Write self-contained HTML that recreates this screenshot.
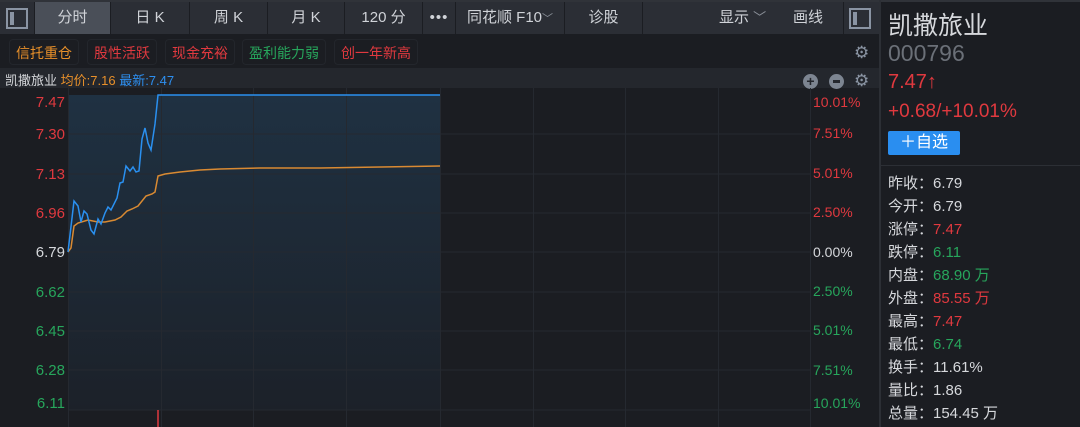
<!DOCTYPE html>
<html><head><meta charset="utf-8"><style>
*{margin:0;padding:0;box-sizing:border-box}
body{width:1080px;height:427px;background:#1b1d22;font-family:"Liberation Sans","Noto Sans CJK SC",sans-serif;color:#c8ccd2;position:relative;overflow:hidden}
.a{position:absolute;white-space:nowrap}
.tab{position:absolute;top:2px;height:32px;background:#2b2e35;color:#d0d3d8;font-size:15px;line-height:32px;text-align:center;border-right:1px solid #1b1d22}
.tag{position:absolute;top:39px;height:26px;font-size:14px;line-height:26px;padding:0 6px;border:1px solid #23262c;border-radius:4px}
.r{color:#e0393f}.g{color:#27a65c}.w{color:#d6d8dc}
.st{position:absolute;left:888px;font-size:15px;color:#d6d8dc}
.ax{position:absolute;width:62px;text-align:right;font-size:15px}
</style></head><body>
<div class="a" style="left:0;top:0;width:880px;height:2px;background:#303339"></div>
<div class="tab" style="left:0;width:35px;background:#2b2e35"><div class="a" style="left:6px;top:6px;width:22px;height:21px;border:2px solid #8a94a3"></div><div class="a" style="left:10px;top:10px;width:4px;height:13px;background:#8a94a3"></div></div>
<div class="tab" style="left:35px;width:76px;background:#4a4f58">分时</div>
<div class="tab" style="left:111px;width:79px">日 K</div>
<div class="tab" style="left:190px;width:78px">周 K</div>
<div class="tab" style="left:268px;width:77px">月 K</div>
<div class="tab" style="left:345px;width:78px">120 分</div>
<div class="tab" style="left:423px;width:33px;letter-spacing:1px">•••</div>
<div class="tab" style="left:456px;width:109px">同花顺 F10<span style="font-size:11px;color:#8a8f98">﹀</span></div>
<div class="tab" style="left:565px;width:78px">诊股</div>
<div class="tab" style="left:643px;width:201px;text-align:left"><span class="a" style="left:76px">显示 <span style="color:#8a8f98;font-size:13px">﹀</span></span><span class="a" style="left:150px">画线</span></div>
<div class="tab" style="left:844px;width:36px"><div class="a" style="left:5px;top:6px;width:22px;height:21px;border:2px solid #8a94a3"></div><div class="a" style="left:9px;top:10px;width:4px;height:13px;background:#8a94a3"></div></div>
<div class="tag" style="left:9px;color:#e8902a">信托重仓</div>
<div class="tag" style="left:87px" ><span class="r">股性活跃</span></div>
<div class="tag" style="left:165px"><span class="r">现金充裕</span></div>
<div class="tag" style="left:242px"><span class="g">盈利能力弱</span></div>
<div class="tag" style="left:334px"><span class="r">创一年新高</span></div>
<div class="a" style="left:854px;top:43px;color:#8a94a3;font-size:17px">⚙</div>
<div class="a" style="left:0;top:68px;width:880px;height:20px;background:#24272d"></div>
<div class="a" style="left:5px;top:70px;font-size:13px"><span class="w">凯撒旅业</span> <span style="color:#e8902a">均价:7.16</span> <span style="color:#2d8ff0">最新:7.47</span></div>
<div class="a" style="left:803px;top:74px;width:15px;height:15px;border-radius:50%;background:#7d8591;color:#24272d;font-size:14px;line-height:15px;text-align:center;font-weight:bold">+</div>
<div class="a" style="left:829px;top:74px;width:15px;height:15px;border-radius:50%;background:#7d8591"><div class="a" style="left:4px;top:6px;width:7px;height:3px;background:#24272d"></div></div>
<div class="a" style="left:854px;top:71px;color:#8a94a3;font-size:17px">⚙</div>
<svg class="a" style="left:0;top:88px" width="880" height="339">
<defs><linearGradient id="f" x1="0" y1="0" x2="0" y2="1"><stop offset="0" stop-color="#1f3142"/><stop offset="1" stop-color="#1c2129"/></linearGradient></defs>
<rect x="68" y="7" width="372" height="315" fill="url(#f)"/>
<g stroke="#252930" stroke-width="1">
<line x1="68" y1="46" x2="810" y2="46"/><line x1="68" y1="86" x2="810" y2="86"/><line x1="68" y1="125" x2="810" y2="125"/><line x1="68" y1="164" x2="810" y2="164"/><line x1="68" y1="204" x2="810" y2="204"/><line x1="68" y1="243" x2="810" y2="243"/><line x1="68" y1="282" x2="810" y2="282"/><line x1="68" y1="322" x2="810" y2="322"/>
<line x1="68.5" y1="0" x2="68.5" y2="339"/><line x1="161.5" y1="0" x2="161.5" y2="339"/><line x1="253.5" y1="0" x2="253.5" y2="339"/><line x1="346.5" y1="0" x2="346.5" y2="339"/><line x1="440.5" y1="0" x2="440.5" y2="339"/><line x1="533.5" y1="0" x2="533.5" y2="339"/><line x1="625.5" y1="0" x2="625.5" y2="339"/><line x1="718.5" y1="0" x2="718.5" y2="339"/><line x1="810.5" y1="0" x2="810.5" y2="339"/>
</g>
<line x1="158" y1="322" x2="158" y2="339" stroke="#e0393f" stroke-width="1.5"/>
<g transform="translate(0,-88)">
<polyline fill="none" stroke="#d98a32" stroke-width="1.5" points="68,252 71,248 74,226 78,223 88,220 98,222 105,222 115,220 121,217 127,211 132,209 138,206 146,196 152,194 155,192 158,176 165,174 180,172 200,170 220,169 260,168 320,168 380,167 440,166"/>
<polyline fill="none" stroke="#2a90f0" stroke-width="1.5" points="68,252 74,201 78,206 81,222 84,211 87,214 91,230 94,234 98,219 101,224 105,213 108,207 111,210 117,198 120,183 123,182 126,166 130,171 133,167 136,172 139,171 142,139 145,128 148,143 151,150 155,124 158,95 440,95"/>
</g>
</svg>
<div class="ax r" style="left:3px;top:94px">7.47</div>
<div class="ax r" style="left:3px;top:126px">7.30</div>
<div class="ax r" style="left:3px;top:166px">7.13</div>
<div class="ax r" style="left:3px;top:205px">6.96</div>
<div class="ax w" style="left:3px;top:244px">6.79</div>
<div class="ax g" style="left:3px;top:284px">6.62</div>
<div class="ax g" style="left:3px;top:323px">6.45</div>
<div class="ax g" style="left:3px;top:362px">6.28</div>
<div class="ax g" style="left:3px;top:395px">6.11</div>
<div class="a r" style="left:813px;top:94px;font-size:14px">10.01%</div>
<div class="a r" style="left:813px;top:125px;font-size:14px">7.51%</div>
<div class="a r" style="left:813px;top:165px;font-size:14px">5.01%</div>
<div class="a r" style="left:813px;top:204px;font-size:14px">2.50%</div>
<div class="a w" style="left:813px;top:244px;font-size:14px">0.00%</div>
<div class="a g" style="left:813px;top:283px;font-size:14px">2.50%</div>
<div class="a g" style="left:813px;top:322px;font-size:14px">5.01%</div>
<div class="a g" style="left:813px;top:362px;font-size:14px">7.51%</div>
<div class="a g" style="left:813px;top:395px;font-size:14px">10.01%</div>
<div class="a" style="left:879px;top:0;width:2px;height:427px;background:#2c2f35"></div>
<div class="a" style="left:881px;top:0;width:199px;height:2px;background:#303339"></div>
<div class="a w" style="left:888px;top:6px;font-size:25px">凯撒旅业</div>
<div class="a" style="left:888px;top:40px;font-size:23px;color:#6b7078">000796</div>
<div class="a r" style="left:888px;top:71px;font-size:20px">7.47↑</div>
<div class="a r" style="left:888px;top:101px;font-size:19px">+0.68/+10.01%</div>
<div class="a" style="left:888px;top:131px;width:72px;height:24px;background:#2a8ef0;border-radius:2px;color:#fff;font-size:16px;line-height:24px;text-align:center">＋自选</div>
<div class="a" style="left:881px;top:165px;width:199px;height:1px;background:#2c2f35"></div>
<div class="st" style="top:172px">昨收：6.79</div>
<div class="st" style="top:195px">今开：6.79</div>
<div class="st" style="top:218px">涨停：<span class="r">7.47</span></div>
<div class="st" style="top:241px">跌停：<span class="g">6.11</span></div>
<div class="st" style="top:264px">内盘：<span class="g">68.90 万</span></div>
<div class="st" style="top:287px">外盘：<span class="r">85.55 万</span></div>
<div class="st" style="top:310px">最高：<span class="r">7.47</span></div>
<div class="st" style="top:333px">最低：<span class="g">6.74</span></div>
<div class="st" style="top:356px">换手：11.61%</div>
<div class="st" style="top:379px">量比：1.86</div>
<div class="st" style="top:402px">总量：154.45 万</div>
</body></html>
